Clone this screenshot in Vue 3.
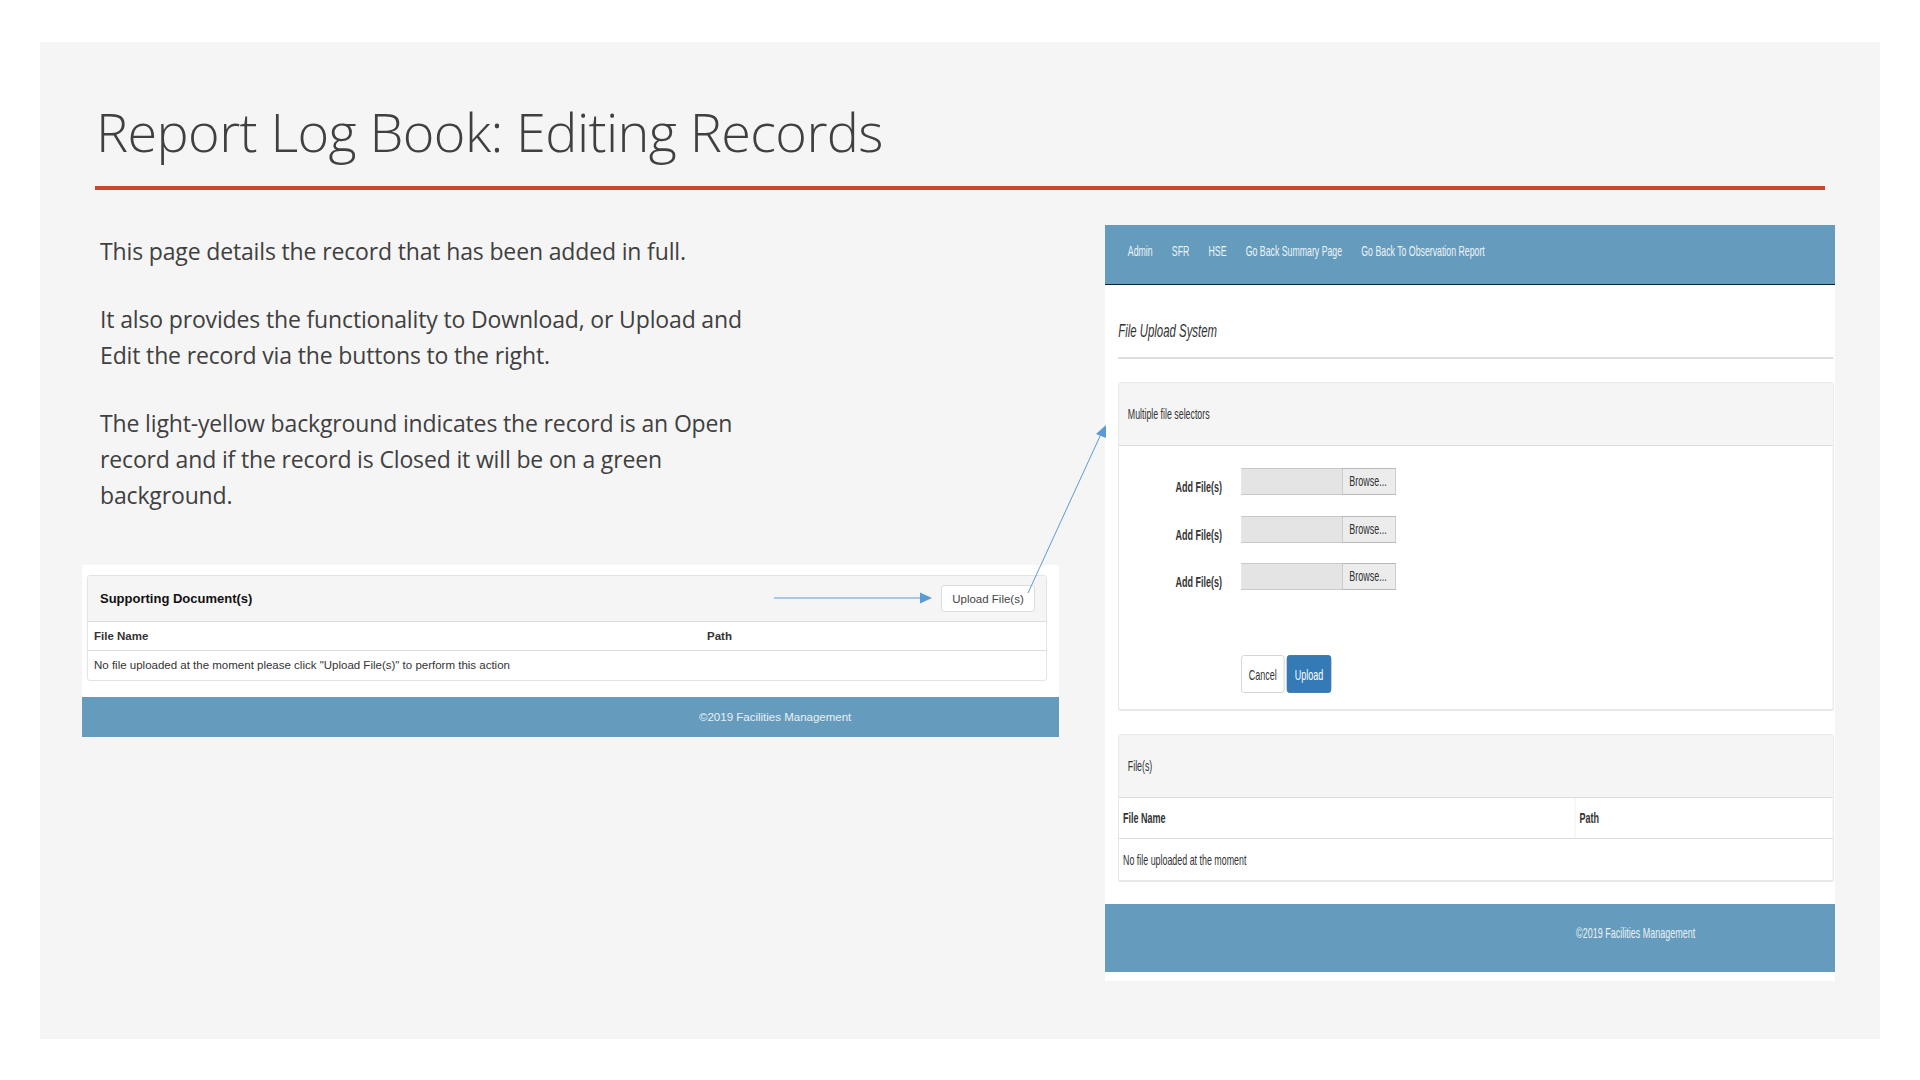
<template>
  <div class="slide">
    <header class="slide-head">
      <h1>Report Log Book: Editing Records</h1>
      <div class="rule"></div>
    </header>

    <div class="content">
      <div class="left-col">
        <div class="copy">
          <p>This page details the record that has been added in full.</p>
          <p>It also provides the functionality to Download, or Upload and Edit the record via the buttons to the right.</p>
          <p>The light-yellow background indicates the record is an Open record and if the record is Closed it will be on a green background.</p>
        </div>

        <div class="shot-small">
          <div class="small-panel">
            <div class="small-head">
              <strong>Supporting Document(s)</strong>
              <button class="small-btn">Upload File(s)</button>
            </div>
            <div class="small-row small-cols">
              <span>File Name</span>
              <span>Path</span>
            </div>
            <div class="small-row">No file uploaded at the moment please click "Upload File(s)" to perform this action</div>
          </div>
          <div class="small-foot">©2019 Facilities Management</div>
        </div>
      </div>

      <div class="shot-big">
        <div class="squeeze">
          <nav class="nav">
            <a v-for="item in navItems" :key="item">{{ item }}</a>
          </nav>

          <div class="page">
            <h2>File Upload System</h2>

            <section class="panel upload-panel">
              <div class="panel-head">Multiple file selectors</div>
              <div class="panel-body">
                <div v-for="n in 3" :key="n" class="file-row">
                  <label>Add File(s)</label>
                  <div class="file-input"></div>
                  <div class="browse">Browse...</div>
                </div>
                <div class="actions">
                  <button class="btn">Cancel</button>
                  <button class="btn primary">Upload</button>
                </div>
              </div>
            </section>

            <section class="panel files-panel">
              <div class="panel-head">File(s)</div>
              <div class="files-cols">
                <span>File Name</span>
                <span>Path</span>
              </div>
              <div class="files-empty">No file uploaded at the moment</div>
            </section>
          </div>

          <footer class="big-foot">©2019 Facilities Management</footer>
        </div>
      </div>
    </div>

    <svg class="arrows" width="1840" height="997" viewBox="0 0 1840 997">
      <line x1="734" y1="556" x2="882" y2="556" stroke="#5b9bd5" stroke-width="1" />
      <polygon points="892,556 880,550.5 880,561.5" fill="#5b9bd5" />
      <line x1="988" y1="551" x2="1061" y2="392" stroke="#5b9bd5" stroke-width="1" />
      <polygon points="1066,383 1056,392 1066,396" fill="#5b9bd5" />
    </svg>
  </div>
</template>

<script setup>
const navItems = ["Admin", "SFR", "HSE", "Go Back Summary Page", "Go Back To Observation Report"];
</script>

<style>
html, body {
  margin: 0;
  background: #fff;
}
</style>

<style scoped>
.slide {
  position: relative;
  box-sizing: border-box;
  width: 1840px;
  height: 997px;
  margin: 42px 0 0 40px;
  background: #f5f5f5;
  font-family: "Open Sans", sans-serif;
  color: #404040;
  overflow: hidden;
}

.slide-head {
  padding: 49px 55px 0;
}

h1 {
  margin: 0 0 15px 1px;
  font-size: 54px;
  font-weight: 300;
  letter-spacing: -0.6px;
  line-height: 80px;
}

.rule {
  width: 1730px;
  height: 4px;
  background: #c8472b;
}

.content {
  display: flex;
  justify-content: space-between;
  margin-top: 35px;
  padding: 0 45px 0 42px;
}

.copy {
  width: 660px;
  padding: 8px 0 0 18px;
  font-size: 23px;
  letter-spacing: -0.15px;
  line-height: 36px;
}

.copy p {
  margin: 0 0 32px;
}

.copy p:last-child {
  margin: 0;
}

.shot-small {
  width: 977px;
  margin-top: 52px;
  padding-top: 10px;
  background: #fff;
  font-family: "Liberation Sans", sans-serif;
  font-size: 11.5px;
  color: #333;
}

.small-panel {
  width: 960px;
  margin-left: 5px;
  border: 1px solid #e4e4e4;
  border-radius: 3px;
  box-sizing: border-box;
}

.small-head {
  display: flex;
  align-items: center;
  justify-content: space-between;
  box-sizing: border-box;
  height: 46px;
  padding: 0 11px 0 12px;
  background: #f5f5f5;
  border-bottom: 1px solid #ddd;
  font-size: 13px;
  color: #111;
}

.small-btn {
  height: 27px;
  width: 94px;
  padding: 0;
  background: #fff;
  border: 1px solid #ddd;
  border-radius: 3px;
  font-family: inherit;
  font-size: 11.5px;
  color: #444;
}

.small-row {
  box-sizing: border-box;
  height: 29px;
  padding: 0 6px;
  line-height: 29px;
  font-size: 11.5px;
}

.small-cols {
  display: grid;
  grid-template-columns: 613px 1fr;
  border-bottom: 1px solid #ddd;
  font-weight: 700;
  font-size: 11.5px;
}

.small-foot {
  box-sizing: border-box;
  height: 40px;
  margin-top: 16px;
  padding-left: 617px;
  background: #659cbd;
  color: #e8f0f5;
  line-height: 40px;
}

.shot-big {
  width: 730px;
  overflow: hidden;
  background: #fff;
}

/* the pasted screenshot is squashed horizontally, so lay it out wide and scale it */
.squeeze {
  width: 1217px;
  padding-bottom: 9px;
  transform: scaleX(0.6);
  transform-origin: left top;
  font-family: "Liberation Sans", sans-serif;
  font-size: 14px;
  color: #333;
}

.nav {
  display: flex;
  gap: 32px;
  box-sizing: border-box;
  height: 60px;
  padding: 18px 0 0 38px;
  background: #659cbd;
  border-bottom: 1px solid #0b2233;
  color: #eef4f8;
  font-size: 14.6px;
}

.page {
  padding: 0 3px 0 22px;
}

h2 {
  box-sizing: border-box;
  height: 74px;
  margin: 0 0 23px;
  padding-top: 35px;
  border-bottom: 2px solid #ddd;
  font-size: 19px;
  font-style: italic;
  font-weight: 400;
  line-height: 22px;
}

.panel {
  box-sizing: border-box;
  border: 1px solid #e2e2e2;
  border-radius: 3px;
  box-shadow: 0 1px 1px rgba(0, 0, 0, 0.1);
}

.upload-panel {
  height: 328px;
  margin-bottom: 24px;
}

.files-panel {
  height: 147px;
  margin-bottom: 23px;
}

.panel-head {
  box-sizing: border-box;
  height: 63px;
  padding: 23px 0 0 15px;
  background: #f5f5f5;
  border-bottom: 1px solid #ddd;
  font-size: 14.7px;
  line-height: 16px;
}

.panel-body {
  padding-top: 22px;
}

.file-row {
  display: flex;
  height: 27px;
  margin-bottom: 20.5px;
}

.file-row label {
  width: 172px;
  padding: 10px 32px 0 0;
  text-align: right;
  font-weight: 700;
  font-size: 15px;
  line-height: 17px;
}

.file-input {
  width: 168px;
  background: #e4e4e4;
  border-top: 1px solid #c9c9c9;
  border-bottom: 1px solid #c9c9c9;
  box-sizing: border-box;
}

.browse {
  box-sizing: border-box;
  width: 90px;
  background: #ececec;
  border: 1px solid #b9b9b9;
  padding-left: 11px;
  font-size: 15px;
  line-height: 23px;
}

.actions {
  display: flex;
  gap: 4px;
  margin: 65px 0 0 204px;
}

.btn {
  box-sizing: border-box;
  width: 72px;
  height: 38px;
  padding: 0;
  background: #fff;
  border: 1px solid #ccc;
  border-radius: 4px;
  font-family: inherit;
  font-size: 15px;
  color: #333;
}

.btn.primary {
  width: 74px;
  background: #337ab7;
  border-color: #2e6da4;
  color: #fff;
}

.files-cols {
  display: grid;
  grid-template-columns: 760px 1fr;
  box-sizing: border-box;
  height: 41px;
  border-bottom: 1px solid #ddd;
  font-weight: 700;
  font-size: 15px;
  line-height: 40px;
}

.files-cols span {
  padding-left: 7px;
}

.files-cols span + span {
  border-left: 1px solid #e6e6e6;
}

.files-empty {
  padding-left: 7px;
  font-size: 14.8px;
  line-height: 42px;
}

.big-foot {
  box-sizing: border-box;
  height: 68px;
  padding: 20px 0 0 785px;
  background: #659cbd;
  color: #e8f0f5;
  font-size: 15px;
  line-height: 18px;
}

.arrows {
  position: absolute;
  left: 0;
  top: 0;
  pointer-events: none;
}
</style>
